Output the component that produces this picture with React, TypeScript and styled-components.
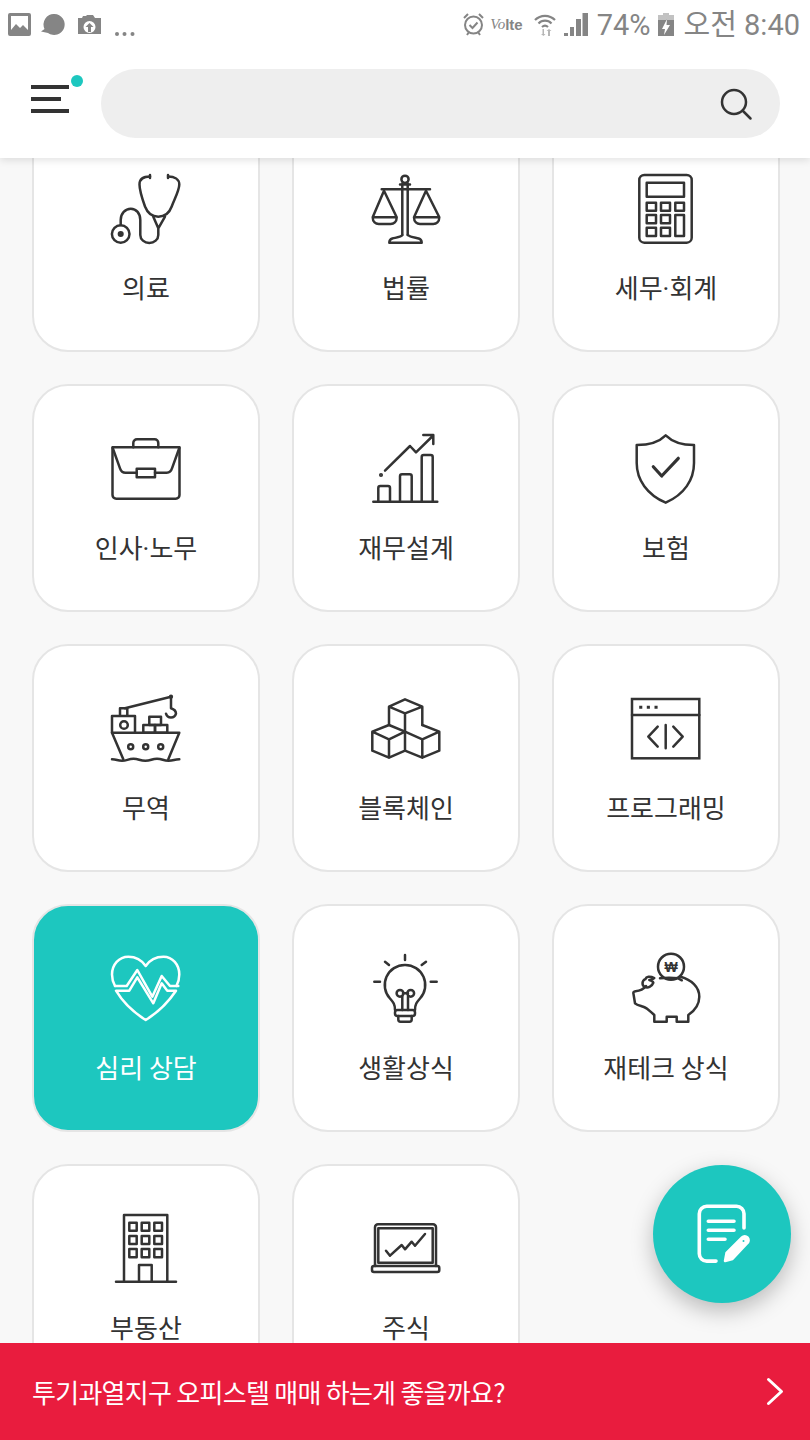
import React from "react";
import styled, { createGlobalStyle } from "styled-components";

const GlobalStyle = createGlobalStyle`
  html, body {
    margin: 0;
    padding: 0;
    background: #f8f8f8;
  }
  * {
    box-sizing: border-box;
  }
`;

const Page = styled.div`
  position: relative;
  display: flex;
  flex-direction: column;
  width: 810px;
  height: 1440px;
  overflow: hidden;
  background: #f8f8f8;
  font-family: "Noto Sans CJK KR", "Noto Sans", sans-serif;
`;

const TopBar = styled.header`
  position: relative;
  z-index: 2;
  flex: none;
  height: 158px;
  background: #fff;
  box-shadow: 0 2px 8px rgba(0, 0, 0, 0.12);
`;

const StatusBar = styled.div`
  display: flex;
  justify-content: space-between;
  align-items: center;
  height: 52px;
  padding: 0 10px 3px 8px;
  color: #858585;
`;

const StatusGroup = styled.div`
  display: flex;
  align-items: center;
`;

const StatusText = styled.span<{ $left: number }>`
  margin-left: ${(p) => p.$left}px;
  font-family: "Roboto", "Noto Sans CJK KR", sans-serif;
  font-size: 29px;
  line-height: 36px;
  white-space: nowrap;
`;

const StatusIcon = styled.svg<{ $left?: number; $top?: number }>`
  display: block;
  flex: none;
  margin-left: ${(p) => p.$left ?? 0}px;
  margin-top: ${(p) => p.$top ?? 0}px;
  fill: currentColor;
`;

const SearchRow = styled.div`
  display: flex;
  align-items: center;
  height: 106px;
  padding: 0 30px 3px 31px;
`;

const MenuButton = styled.div`
  position: relative;
  display: flex;
  flex: none;
  flex-direction: column;
  gap: 8px;
  width: 70px;
  margin-bottom: 10px;
`;

const MenuLine = styled.span<{ $width: number }>`
  display: block;
  width: ${(p) => p.$width}px;
  height: 4px;
  background: #333;
`;

const MenuDot = styled.span`
  position: absolute;
  top: -10px;
  left: 40px;
  width: 12px;
  height: 12px;
  border-radius: 50%;
  background: #1dc7bf;
`;

const SearchBox = styled.div`
  display: flex;
  flex: 1;
  justify-content: flex-end;
  align-items: center;
  height: 69px;
  padding-right: 29px;
  border-radius: 35px;
  background: #eee;
  color: #333;
`;

const Scroller = styled.main`
  flex: 1;
  min-height: 0;
  overflow: hidden;
`;

const Grid = styled.div`
  display: grid;
  grid-template-columns: repeat(3, 228px);
  gap: 32px;
  margin-top: -34px;
  padding-left: 32px;
`;

const Card = styled.div<{ $active?: boolean }>`
  display: flex;
  flex-direction: column;
  align-items: center;
  height: 228px;
  padding-top: 49px;
  border: 2px solid #e5e5e5;
  border-radius: 36px;
  background: ${(p) => (p.$active ? "#1dc7bf" : "#fff")};
  color: ${(p) => (p.$active ? "#fff" : "#333")};
`;

const Glyph = styled.svg`
  display: block;
  flex: none;
  overflow: visible;
  fill: none;
  stroke: currentColor;
  stroke-width: 2.5;
  stroke-linecap: round;
  stroke-linejoin: round;
`;

const Label = styled.span`
  margin-top: 26px;
  font-size: 26px;
  font-weight: 400;
  line-height: 36px;
  white-space: nowrap;
`;

const LabelDot = styled.span`
  font-family: "Roboto", sans-serif;
`;

const Banner = styled.footer`
  display: flex;
  flex: none;
  justify-content: space-between;
  align-items: center;
  height: 97px;
  padding: 0 27px 0 32px;
  background: #e91c3e;
  color: #fff;
`;

const BannerText = styled.span`
  font-size: 26px;
  letter-spacing: -0.72px;
  line-height: 36px;
`;

const Fab = styled.button`
  position: absolute;
  right: 19px;
  bottom: 137px;
  z-index: 3;
  display: flex;
  justify-content: center;
  align-items: center;
  width: 138px;
  height: 138px;
  padding: 0 0 0 12px;
  border: 0;
  border-radius: 50%;
  background: #1dc7bf;
  color: #fff;
  box-shadow: 0 8px 22px rgba(0, 0, 0, 0.25);
`;

const FabGlyph = styled(Glyph)`
  stroke-width: 3.6;
`;

const CoinText = styled.text`
  fill: currentColor;
  stroke: none;
  font-family: "Liberation Sans", sans-serif;
  font-size: 14px;
  font-weight: 700;
  text-anchor: middle;
`;

const VolteVo = styled.span`
  margin-left: 6px;
  font-family: "Liberation Serif", serif;
  font-size: 15px;
  font-style: italic;
`;

const VolteLte = styled.span`
  font-family: "Liberation Sans", sans-serif;
  font-size: 15px;
  font-weight: 700;
`;

const Boxes = ({ items }: { items: number[][] }) => (
  <>
    {items.map(([x, y, w, h]) => (
      <rect key={`${x}-${y}`} x={x} y={y} width={w} height={h} />
    ))}
  </>
);

const Stethoscope = () => (
  <>
    <path d="M38 1.500c-6 0-10.500 2.500-10.500 8 0 6 3 15 5.500 22 2.500 6.500 7.500 10.200 13.300 10.200S57.300 38 59.700 31.500c2.500-7 7.600-16 7.600-22 0-5.500-5-8-11-8" />
    <path d="M38 0v3M56 0v3" />
    <path d="M41.300 41.700 46.300 53.300 53 41.700M46.300 53.300V60a9 8 0 0 1-18 0V45c0-6.500-4-11.300-9.500-11.300S8.700 38.500 8.700 45v5" />
    <circle cx="8.700" cy="59" r="8.800" />
    <circle cx="8.700" cy="59" r="1.800" fill="currentColor" />
  </>
);

const Scales = () => (
  <>
    <circle cx="33" cy="4.300" r="3.600" />
    <path d="M30.300 8.500V60M35.700 8.500V60M28 9.500h10M9.700 14.300H58" />
    <path d="M12 15.700.7 42.300h24L12 15.700ZM.7 42.300c0 4.500 3 6.700 6 6.700h12c3 0 6-2.200 6-6.700" />
    <path d="M54 15.700 42 42.300h25.300L54 15.700ZM42 42.300c0 4.500 3 6.700 6 6.700h13.300c3 0 6-2.200 6-6.700" />
    <path d="M30.300 60c-1 2-6 2.500-10 3.500-2.500.7-3 2.500-3 4.200h32.400c0-1.700-.5-3.500-3-4.200-4-1-9-1.500-10.900-3.500" />
  </>
);

const Calculator = () => (
  <>
    <rect x="7.300" y="0" width="52.400" height="67.700" rx="5" />
    <Boxes
      items={[
        [14.700, 7.700, 37.300, 14],
        [14.700, 27.700, 9.300, 8],
        [29, 27.700, 9, 8],
        [43.300, 27.700, 8.700, 8],
        [14.700, 40, 9.300, 8.300],
        [29, 40, 9, 8.300],
        [43.300, 40, 8.700, 21],
        [14.700, 52.700, 9.300, 8.300],
        [29, 52.700, 9, 8.300],
      ]}
    />
  </>
);

const Briefcase = () => (
  <>
    <path d="M.5 12.300h67V60a3.700 3.700 0 0 1-3.700 3.700H4.200A3.700 3.700 0 0 1 .5 60V12.300Z" />
    <path d="M21.300 12.300V8a3.700 3.700 0 0 1 3.700-3.700h17.600A3.700 3.700 0 0 1 46.300 8v4.300" />
    <path d="M.7 13 8 33.300c1 3 3 4.400 5.500 4.400h11.200M43 37.700h11.700c2.500 0 4.500-1.400 5.300-4.400L67.300 13" />
    <rect x="24.700" y="33.700" width="18.300" height="8.600" />
  </>
);

const Growth = () => (
  <>
    <path d="M1.300 66.700h64M6.300 66.700V53a2 2 0 0 1 2-2H16a2 2 0 0 1 2 2v13.700M28 66.700V41.300a2 2 0 0 1 2-2h7.700a2 2 0 0 1 2 2v25.400M49.700 66.700V22a2 2 0 0 1 2-2h7a2 2 0 0 1 2 2v44.700" />
    <path d="M13 35.700 38 11l6 6.300L60.700 1M51.300 0h10v9" />
    <circle cx="9" cy="40" r="0.800" fill="currentColor" />
  </>
);

const Shield = () => (
  <>
    <path d="M33.700.3C27.500 6.500 18 10 4.700 10v18c0 17 10.500 31.500 29 39.700 18.500-8.200 28.300-22.700 28.300-39.700V10C49 10 40 6.500 33.700.3Z" />
    <path d="m21.300 31.700 8.400 9.300 16.600-17.700" strokeWidth="3.200" />
  </>
);

const Ship = () => (
  <>
    <path d="M13 13.300 59 1.700v11.600c3 1 5 2.800 5 5.400a5.200 5.200 0 0 1-10 0" />
    <circle cx="59" cy="1.700" r="0.900" />
    <path d="M8 21v-7.700h7.300V21M0 37.700V21h23v16.700" />
    <circle cx="12" cy="30" r="3.800" />
    <Boxes
      items={[
        [37.300, 21.700, 11.700, 8.300],
        [31.300, 30, 11.700, 7.700],
        [43, 30, 12.300, 7.700],
      ]}
    />
    <path d="M0 37.700h67.300L56.300 64.300M0 37.700l11.300 26.600" />
    <circle cx="18.700" cy="51.700" r="2.500" />
    <circle cx="33.700" cy="51.700" r="2.500" />
    <circle cx="48.700" cy="51.700" r="2.500" />
    <path d="M0 64.300c5 0 5 1.500 10 1.500s6-2 11.500-2 6 2 11.800 2 6.200-2 11.700-2 6 2 11.500 2 5.500-1.500 10.800-1.500" />
  </>
);

const Blocks = () => (
  <>
    <path d="M33 4.300 50.300 11.700 33 18.300 17 11.700 33 4.300ZM17 11.700V30M33 18.300v18.400M50.300 11.700V30" />
    <path d="M17 30 33 36.700 17 44.300.3 36.700 17 30ZM.3 36.700v19L17 62.700l16-7v-19M17 44.300v18.400" />
    <path d="M50.300 30 67.300 36.700 50.300 44.300 33 36.700M67.300 36.700v19L50.300 62.700 33 55.700M50.300 44.300v18.400" />
  </>
);

const CodeWindow = () => (
  <>
    <rect x="0" y="4" width="67.300" height="59.300" strokeLinejoin="miter" />
    <path d="M0 20h67.300" />
    <path d="M8.700 12.300h.1M16.300 12.300h.1M24 12.300h.1" strokeWidth="3" strokeLinecap="square" />
    <path d="M25.700 31.700 16.300 41.700l9.400 10M33.700 30v23.300M41.300 31.700l9.400 10-9.400 10" />
  </>
);

const HeartPulse = () => (
  <>
    <path d="M3 31C1 27.500 0 23.500 0 19.500 0 9.500 7 1.700 16.300 1.700c7.500 0 13.500 3.500 17.400 9.300C37.500 5.200 44 1.700 51.500 1.700c9 0 15.800 7.800 15.800 17.800 0 4-1 8-2.900 11.500" />
    <path d="M3 31h11.700l10.600-16 15 26.700L49.700 21 58 31h8.300" />
    <path d="M4 35.700h13.300l8-13.400 16 26 8.400-20 5.600 7.400H64C55 49 45 58 33.700 65 22.500 58 12 49 4 35.700Z" />
  </>
);

const Bulb = () => (
  <>
    <path d="M33 0v5M13 6.700l4 3.300M54 6.700 49.700 10M2.300 26.700H8M58.700 26.700h6" />
    <path d="M23 55c0-6-2-8-5-11.500A20 20 0 0 1 33 10a20 20 0 0 1 15 33.500c-3 3.500-5 5.500-5 11.500" />
    <circle cx="28" cy="38.300" r="3.400" />
    <circle cx="38.700" cy="38.300" r="3.400" />
    <path d="M30.300 41.500V55M36 41.500V55M31 38.300h5" />
    <rect x="23" y="55" width="20" height="6" rx="2.500" />
    <path d="M26.300 61v3.500a2.200 2.200 0 0 0 2.200 2.200h9a2.200 2.200 0 0 0 2.200-2.200V61" />
  </>
);

const PiggyBank = () => (
  <>
    <circle cx="39" cy="11.700" r="13" />
    <CoinText x="39" y="16.500">₩</CoinText>
    <path d="M28 23.300c6-.8 12-.8 18.300 0l3.500 2" />
    <path d="M48.700 21.700c10.500 3 18.600 10 18.600 20 0 7.500-4 13.500-11 18.300v6.700H44.700v-5h-10v5H22.300V60c-4-3.500-7-7-11-8.300-3-1-6.300-1.500-8.300-3.400L1.500 39c-.5-1.800.3-2.600 2-2.800 4-.4 7.500-1.300 10.500-5.200" />
    <path d="M21.300 27.700c-1.500 4-5.500 6-9 4-2.500-1.500-2.500-6 1-7.500 1-2.700 4.500-3.500 9-1.200-1.500 1.300-3.500 2-5 2 2 .5 3.500 1.200 4 2.700Z" />
  </>
);

const Building = () => (
  <>
    <path d="M4 66.700h60M12 66.700V0h43.300v66.700M27 66.700V50h12.700v16.700" />
    <Boxes
      items={[
        [17.300, 7.700, 7.400, 8],
        [29.700, 7.700, 7.600, 8],
        [42.300, 7.700, 7.700, 8],
        [17.300, 21, 7.400, 8],
        [29.700, 21, 7.600, 8],
        [42.300, 21, 7.700, 8],
        [17.300, 34, 7.400, 8.300],
        [29.700, 34, 7.600, 8.300],
        [42.300, 34, 7.700, 8.300],
      ]}
    />
  </>
);

const Laptop = () => (
  <>
    <path d="M3 51V12.300a3 3 0 0 1 3-3h55a3 3 0 0 1 3 3V51" />
    <rect x="6.300" y="13.300" width="54.400" height="34.400" />
    <rect x="0" y="51" width="67.300" height="6" rx="2" />
    <path d="m14 35.700 4 5 11.700-10.700 3.300 4.300 6.700-7.600 3.300 4L53 19" />
  </>
);

const items = [
  { label: ["의료"], icon: <Stethoscope /> },
  { label: ["법률"], icon: <Scales /> },
  { label: ["세무", "회계"], icon: <Calculator /> },
  { label: ["인사", "노무"], icon: <Briefcase /> },
  { label: ["재무설계"], icon: <Growth /> },
  { label: ["보험"], icon: <Shield /> },
  { label: ["무역"], icon: <Ship /> },
  { label: ["블록체인"], icon: <Blocks /> },
  { label: ["프로그래밍"], icon: <CodeWindow /> },
  { label: ["심리 상담"], icon: <HeartPulse />, active: true },
  { label: ["생활상식"], icon: <Bulb /> },
  { label: ["재테크 상식"], icon: <PiggyBank /> },
  { label: ["부동산"], icon: <Building /> },
  { label: ["주식"], icon: <Laptop /> },
];

export default function App() {
  return (
    <Page>
      <GlobalStyle />
      <TopBar>
        <StatusBar>
          <StatusGroup>
            <StatusIcon width="23" height="23" viewBox="0 0 23 23">
              <path
                fillRule="evenodd"
                d="M2 0h19a2 2 0 0 1 2 2v19a2 2 0 0 1-2 2H2a2 2 0 0 1-2-2V2a2 2 0 0 1 2-2Zm1 17 5-6 4 4 3-3 5 5V3H3v14Z"
              />
            </StatusIcon>
            <StatusIcon $left={10} width="24" height="22" viewBox="0 0 24 22">
              <path d="M13.500 0a10.500 10.500 0 1 1-6.500 19L0 17.500l3.500-2.500A10.500 10.500 0 0 1 13.500 0Z" />
            </StatusIcon>
            <StatusIcon $left={13} width="23" height="19" viewBox="0 0 23 19">
              <path
                fillRule="evenodd"
                d="M0 3h4l1-2h3l1-1h6l2 3h6v16H0V3Zm11.500 3a6 6 0 1 0 0 12 6 6 0 0 0 0-12Zm0 2 4 4H13v5h-3v-5H7.500l4-4Z"
              />
            </StatusIcon>
            <StatusIcon $left={14} $top={18} width="20" height="4" viewBox="0 0 20 4">
              <circle cx="2" cy="2" r="2" />
              <circle cx="9.500" cy="2" r="2" />
              <circle cx="17.500" cy="2" r="2" />
            </StatusIcon>
          </StatusGroup>
          <StatusGroup>
            <StatusIcon width="21" height="23" viewBox="0 0 21 23">
              <circle cx="10.500" cy="12" r="8.500" fill="none" stroke="currentColor" strokeWidth="2" />
              <path d="m6.500 12 3 3 5-5.500" fill="none" stroke="currentColor" strokeWidth="2" />
              <path d="M1 5 5 1M20 5l-4-4M4 22l2-3M17 22l-2-3" stroke="currentColor" strokeWidth="2" />
            </StatusIcon>
            <VolteVo>Vo</VolteVo>
            <VolteLte>lte</VolteLte>
            <StatusIcon $left={11} width="22" height="23" viewBox="0 0 22 23">
              <path
                d="M1 7a14 14 0 0 1 20 0M4.500 10.500a9 9 0 0 1 13 0M8 14a4.500 4.500 0 0 1 6 0"
                fill="none"
                stroke="currentColor"
                strokeWidth="2.200"
              />
              <path d="M8.500 16v5H7l2.500 2 2-2h-1.500v-5ZM14 23v-5h-1.500l2.500-2 2.500 2H16v5Z" opacity="0.6" />
            </StatusIcon>
            <StatusIcon $left={8} width="24" height="23" viewBox="0 0 24 23">
              <path d="M0 20h4v3H0zM6 14h4v9H6zM12 6h5v17h-5zM18.500 0H24v23h-5.500z" />
            </StatusIcon>
            <StatusText $left={9}>74%</StatusText>
            <StatusIcon $left={7} width="16" height="23" viewBox="0 0 16 23">
              <path d="M5 0h6v2h5v5H0V2h5z" opacity="0.5" />
              <path d="M0 7h16v16H0zm9-1-5 10h3l-1 6 6-10H8.500z" fillRule="evenodd" />
            </StatusIcon>
            <StatusText $left={10}>오전 8:40</StatusText>
          </StatusGroup>
        </StatusBar>
        <SearchRow>
          <MenuButton>
            <MenuDot />
            <MenuLine $width={38} />
            <MenuLine $width={30} />
            <MenuLine $width={38} />
          </MenuButton>
          <SearchBox>
            <Glyph width="30" height="30" viewBox="0 0 30 30">
              <circle cx="13" cy="13" r="12" />
              <path d="m22 22 7.500 7.500" />
            </Glyph>
          </SearchBox>
        </SearchRow>
      </TopBar>
      <Scroller>
        <Grid>
          {items.map((item) => (
            <Card key={item.label.join("")} $active={item.active}>
              <Glyph width="68" height="68" viewBox="0 0 68 68">
                {item.icon}
              </Glyph>
              <Label>
                {item.label[0]}
                {item.label[1] && (
                  <>
                    <LabelDot>·</LabelDot>
                    {item.label[1]}
                  </>
                )}
              </Label>
            </Card>
          ))}
        </Grid>
      </Scroller>
      <Fab aria-label="글쓰기">
        <FabGlyph width="60" height="60" viewBox="0 0 60 60">
          <path d="M46 24V9.700a7.400 7.400 0 0 0-7.400-7.400H8.700a7.400 7.400 0 0 0-7.400 7.400v40a7.400 7.400 0 0 0 7.400 7.400H18" />
          <path d="M10.300 17.300H36M10.300 26.300H36M10.300 35.300H27" />
          <path
            d="m27 57 1.500-8L44 33.500a3.800 3.800 0 0 1 5.500 5.500L34.500 55Z"
            fill="currentColor"
            strokeWidth="2.500"
          />
          <circle cx="45.500" cy="37" r="1" fill="#1dc7bf" stroke="none" />
        </FabGlyph>
      </Fab>
      <Banner>
        <BannerText>투기과열지구 오피스텔 매매 하는게 좋을까요?</BannerText>
        <Glyph width="16" height="27" viewBox="0 0 16 27">
          <path d="m1.500 1.500 13 12-13 12" strokeWidth="3" />
        </Glyph>
      </Banner>
    </Page>
  );
}
